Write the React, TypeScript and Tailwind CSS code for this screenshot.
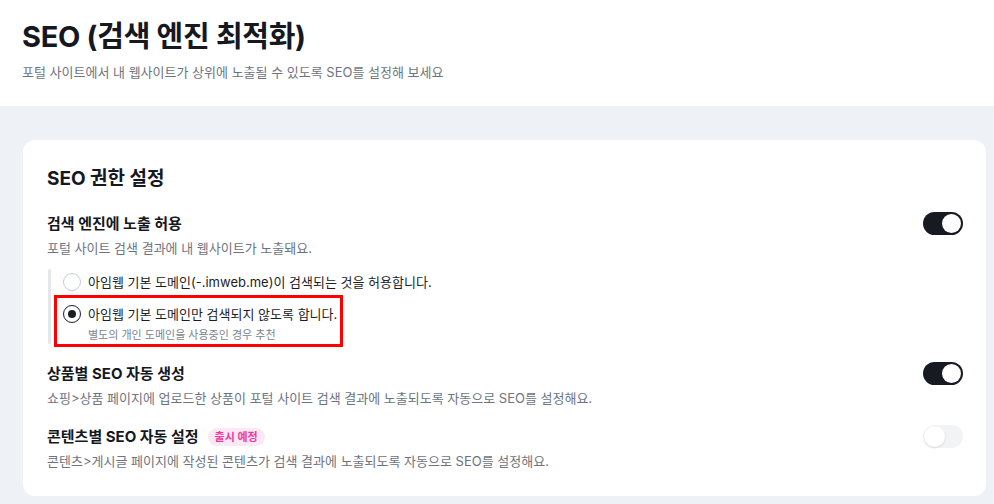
import React from "react";

const FONT = "font-['Inter','Noto_Sans_CJK_KR',sans-serif]";

function Toggle({ on }: { on: boolean }) {
  return on ? (
    <div className="flex h-[23px] w-[40px] shrink-0 items-center justify-end rounded-full bg-[#171a21] px-[2px]">
      <div className="h-[19px] w-[19px] rounded-full bg-white" />
    </div>
  ) : (
    <div className="flex h-[23px] w-[40px] shrink-0 items-center justify-start rounded-full bg-[#f2f3f5] px-[1px]">
      <div className="h-[21px] w-[21px] rounded-full bg-white shadow-[0_1px_2px_rgba(0,0,0,0.12)]" />
    </div>
  );
}

function Radio({ checked }: { checked: boolean }) {
  return checked ? (
    <div className="flex h-[18px] w-[18px] shrink-0 items-center justify-center rounded-full border-[1.5px] border-[#1b1e25] bg-white">
      <div className="h-[8px] w-[8px] rounded-full bg-[#1b1e25]" />
    </div>
  ) : (
    <div className="h-[18px] w-[18px] shrink-0 rounded-full border border-[#c9cdd3] bg-white" />
  );
}

function SettingRow({
  title,
  desc,
  on,
  badge,
}: {
  title: string;
  desc: string;
  on: boolean;
  badge?: string;
}) {
  return (
    <div className="flex items-start justify-between">
      <div>
        <div className="flex items-center gap-[9px]">
          <span className="text-[15px] font-bold leading-[23px] text-[#15181e]">{title}</span>
          {badge && (
            <span className="rounded-full bg-[#fde8f4] px-[7px] text-[11px] font-bold leading-[18px] text-[#ec3a9f]">
              {badge}
            </span>
          )}
        </div>
        <p className="mt-[3px] text-[13px] leading-[20px] text-[#6d7480]">{desc}</p>
      </div>
      <Toggle on={on} />
    </div>
  );
}

export default function App() {
  return (
    <div className={`${FONT} min-h-[504px] w-[994px] bg-[#eef1f5]`}>
      <header className="h-[106px] bg-white pl-[22px] pt-[17px]">
        <h1 className="text-[29px] font-bold leading-[40px] tracking-[-0.3px] text-[#15181e]">
          SEO (검색 엔진 최적화)
        </h1>
        <p className="mt-[5px] text-[13px] leading-[20px] text-[#6d7480]">
          포털 사이트에서 내 웹사이트가 상위에 노출될 수 있도록 SEO를 설정해 보세요
        </p>
      </header>

      <main className="pl-[23px] pr-[8px] pt-[34px]">
        <section className="rounded-[12px] bg-white pb-[25px] pl-[24px] pr-[23px] pt-[25px]">
          <h2 className="text-[19px] font-bold leading-[28px] text-[#15181e]">SEO 권한 설정</h2>

          <div className="mt-[19px]">
            <SettingRow
              title="검색 엔진에 노출 허용"
              desc="포털 사이트 검색 결과에 내 웹사이트가 노출돼요."
              on
            />

            <div className="mt-[11px] flex">
              <div className="mb-[3px] ml-[1px] w-[3px] self-stretch rounded-full bg-[#e5e7eb]" />
              <div className="pl-[3px]">
                <div className="flex h-[26px] items-center gap-[7px] pl-[9px]">
                  <Radio checked={false} />
                  <span className="text-[13px] leading-[20px] text-[#1b1e25]">
                    아임웹 기본 도메인(-.imweb.me)이 검색되는 것을 허용합니다.
                  </span>
                </div>
                <div className="w-[289px] border-[3px] border-[#ff0000] pb-[1px] pl-[6px] pt-[6px]">
                  <div className="flex items-center gap-[7px]">
                    <Radio checked />
                    <span className="text-[13px] leading-[20px] text-[#1b1e25]">
                      아임웹 기본 도메인만 검색되지 않도록 합니다.
                    </span>
                  </div>
                  <p className="mt-[3px] pl-[25px] text-[11px] leading-[16px] text-[#7c838f]">
                    별도의 개인 도메인을 사용중인 경우 추천
                  </p>
                </div>
              </div>
            </div>

            <div className="mt-[15px]">
              <SettingRow
                title="상품별 SEO 자동 생성"
                desc="쇼핑>상품 페이지에 업로드한 상품이 포털 사이트 검색 결과에 노출되도록 자동으로 SEO를 설정해요."
                on
              />
            </div>

            <div className="mt-[17px]">
              <SettingRow
                title="콘텐츠별 SEO 자동 설정"
                desc="콘텐츠>게시글 페이지에 작성된 콘텐츠가 검색 결과에 노출되도록 자동으로 SEO를 설정해요."
                on={false}
                badge="출시 예정"
              />
            </div>
          </div>
        </section>
      </main>
    </div>
  );
}
